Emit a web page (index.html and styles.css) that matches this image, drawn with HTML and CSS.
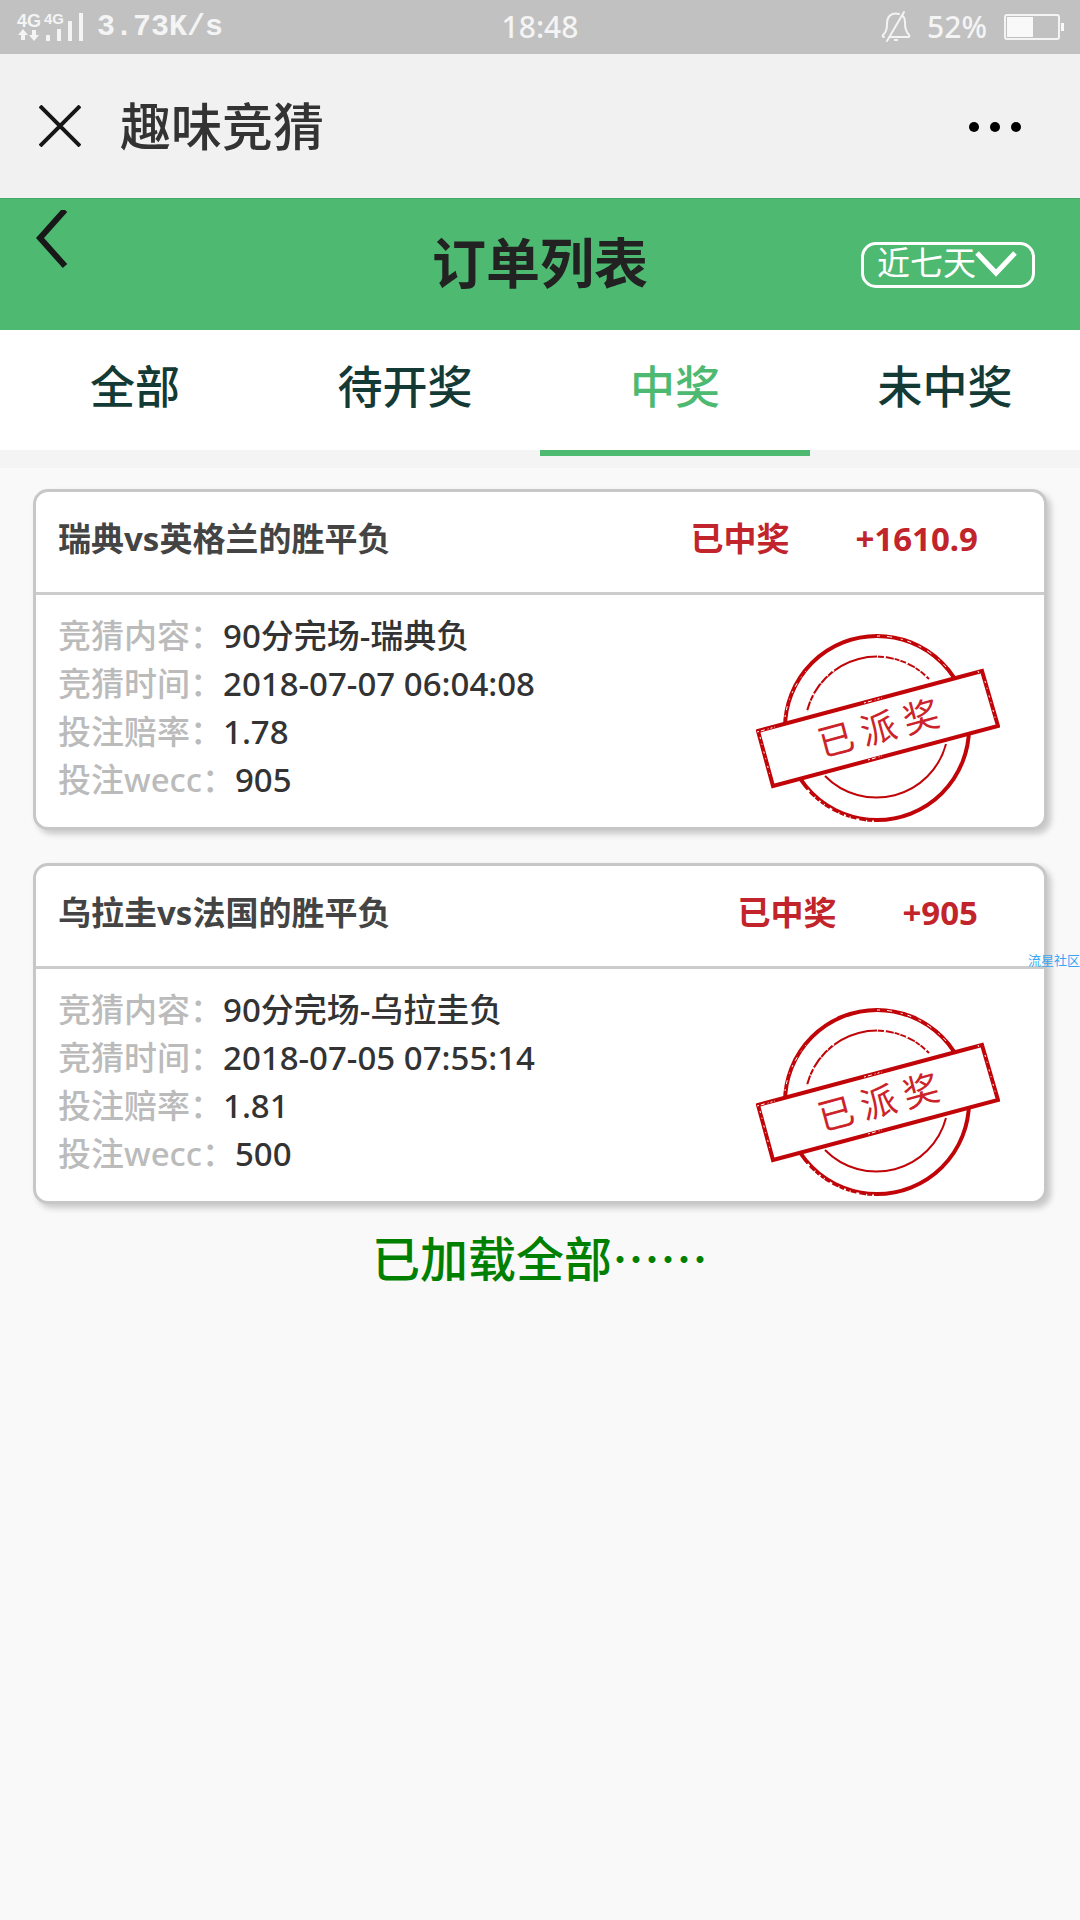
FILE: index.html
```html
<!DOCTYPE html>
<html lang="zh-CN">
<head>
<meta charset="utf-8">
<meta name="viewport" content="width=device-width">
<title>趣味竞猜</title>
<link rel="stylesheet" href="styles.css">
</head>
<body>
<svg width="0" height="0" class="symbols" aria-hidden="true">
  <symbol id="stamp" viewBox="0 0 244 190">
    <g fill="none" stroke="#c00408">
      <circle cx="121" cy="95" r="92" stroke-width="4"/>
      <path d="M51 78A72 72 0 0 1 173 46M190 111A72 72 0 0 1 69 143" stroke-width="2"/>
    </g>
    <g fill="none" stroke="#fff">
      <path d="M121 3A92 92 0 0 1 190 34" stroke-width="1" stroke-dasharray="3 7 5 9 2 5 4 8"/>
      <path d="M29 84A92 92 0 0 1 50 38" stroke-width="1" stroke-dasharray="2 5 4 7 1 6"/>
      <path d="M118 189A94 94 0 0 1 50 156" stroke-width="3" stroke-dasharray="2 5 1 7 3 6 1 4"/>
      <path d="M121 23A72 72 0 0 1 173 46" stroke-width="3" stroke-dasharray="1 6 2 8 1 5"/>
      <path d="M51 78A72 72 0 0 1 80 35" stroke-width="3" stroke-dasharray="1 9 1 6 2 12"/>
    </g>
    <path d="M2 98L226 38L242 93L17 153Z" fill="#fff" stroke="#c00408" stroke-width="4"/>
    <g fill="none" stroke="#fff">
      <path d="M108 70l18-5M112 127l14-4M1 99l18-5M222 38l5 12" stroke-width="1" stroke-dasharray="2 2 4 3 1 2"/>
      <path d="M4 104l11 42M229 48l11 40" stroke-width="1" stroke-dasharray="2 5 1 7"/>
    </g>
    <text class="stamp-text" x="-44 0 44" y="0" transform="translate(126 108) rotate(-15)" text-anchor="middle">已派奖</text>
  </symbol>
</svg>

<header class="status">
  <div class="status-left">
    <svg width="70" height="38" viewBox="14 8 70 38" fill="#f4f4f4" aria-hidden="true">
      <text class="net" x="16" y="27" font-size="18">4G</text>
      <text class="net" x="43" y="24" font-size="15">4G</text>
      <path d="M22 29l5 6h-3v5h-4v-5h-3zM33 41l-5-6h3v-5h4v5h3z"/>
      <path d="M45 35h4v6h-4zM56 29h4v12h-4zM67 21h4v20h-4zM78 13h4v28h-4z"/>
    </svg>
    <span class="speed">3.73K/s</span>
  </div>
  <time class="clock">18:48</time>
  <div class="status-right">
    <svg width="30" height="34" viewBox="880 11 30 34" fill="none" stroke="#f4f4f4" stroke-width="2" stroke-linecap="round" aria-hidden="true">
      <path d="M898 15c-8-2-12 3-12 9c0 7-1 9-4 12q-1 2 1 2M889 38h18q2 0 1-2c-3-4-4-6-4-13c0-2 0-4-2-6M903 13L886 42"/>
      <path d="M893 41h4" stroke-linecap="butt"/>
    </svg>
    <span>52%</span>
    <svg width="62" height="28" viewBox="1003 13 62 28" aria-hidden="true">
      <rect x="1005" y="15" width="54" height="24" rx="2" fill="none" stroke="#f4f4f4" stroke-width="2"/>
      <path d="M1007 17h26v20h-26zM1061 23h3v8h-3z" fill="#f9f9f9"/>
    </svg>
  </div>
</header>

<div class="nav">
  <button class="icon-btn" type="button" aria-label="关闭">
    <svg width="42" height="42" viewBox="0 0 42 42" fill="none" stroke="#161616" stroke-width="4"><path d="M1 1l40 40M41 1L1 41"/></svg>
  </button>
  <span class="nav-title">趣味竞猜</span>
  <button class="icon-btn more" type="button" aria-label="更多">
    <svg width="54" height="12" viewBox="0 0 54 12"><circle cx="6" cy="7" r="5"/><circle cx="27" cy="7" r="5"/><circle cx="48" cy="7" r="5"/></svg>
  </button>
</div>

<div class="banner">
  <a class="back" href="#" aria-label="返回">
    <svg width="32" height="58" viewBox="0 0 32 58" fill="none" stroke="#181818" stroke-width="6"><path d="M29 0L4 28L29 56"/></svg>
  </a>
  <h1>订单列表</h1>
  <div class="range">
    <select aria-label="时间范围"><option>近七天</option></select>
    <svg width="42" height="27" viewBox="0 0 42 27" fill="none" stroke="#fff" stroke-width="5" aria-hidden="true"><path d="M2 2l19 20L40 2"/></svg>
  </div>
</div>

<nav class="tabs">
  <a href="#">全部</a>
  <a href="#">待开奖</a>
  <a href="#" class="active" aria-current="page">中奖</a>
  <a href="#">未中奖</a>
</nav>

<main class="orders">
  <article class="card">
    <header class="card-head">
      <h2>瑞典vs英格兰的胜平负</h2>
      <span class="result">已中奖</span>
      <span class="amount">+1610.9</span>
    </header>
    <div class="card-body">
      <dl>
        <div><dt>竞猜内容：</dt><dd>90分完场-瑞典负</dd></div>
        <div><dt>竞猜时间：</dt><dd>2018-07-07 06:04:08</dd></div>
        <div><dt>投注赔率：</dt><dd>1.78</dd></div>
        <div><dt>投注wecc：</dt><dd>905</dd></div>
      </dl>
      <svg class="stamp" width="244" height="190" role="img" aria-label="已派奖"><use href="#stamp"/></svg>
    </div>
  </article>
  <article class="card">
    <header class="card-head">
      <h2>乌拉圭vs法国的胜平负</h2>
      <span class="result">已中奖</span>
      <span class="amount">+905</span>
    </header>
    <div class="card-body">
      <dl>
        <div><dt>竞猜内容：</dt><dd>90分完场-乌拉圭负</dd></div>
        <div><dt>竞猜时间：</dt><dd>2018-07-05 07:55:14</dd></div>
        <div><dt>投注赔率：</dt><dd>1.81</dd></div>
        <div><dt>投注wecc：</dt><dd>500</dd></div>
      </dl>
      <svg class="stamp" width="244" height="190" role="img" aria-label="已派奖"><use href="#stamp"/></svg>
    </div>
  </article>
  <p class="end">已加载全部……</p>
</main>
<span class="watermark">流星社区</span>
</body>
</html>
```
FILE: styles.css
```css
* { box-sizing: border-box; }

body {
  position: relative;
  margin: 0;
  min-height: 100vh;
  background: #f9f9f9;
  color: #333;
  font-family: "Noto Sans", "Noto Sans CJK SC", sans-serif;
  font-size: 33px;
  line-height: 48px;
}

h1, h2, p, dl, dd { margin: 0; }
a { color: inherit; text-decoration: none; }
svg { display: block; flex: none; }
.symbols { position: absolute; }

.status {
  display: grid;
  grid-template-columns: 1fr auto 1fr;
  align-items: center;
  height: 54px;
  padding: 0 15px;
  background: #c1c1c1;
  color: #f4f4f4;
  font-size: 30px;
  font-weight: 500;
}
.status-left, .status-right { display: flex; align-items: center; gap: 12px; }
.status-right { justify-content: flex-end; gap: 16px; }
.net { font-family: "Liberation Sans", sans-serif; font-weight: 700; }
.speed { font-family: "Liberation Mono", monospace; font-weight: 700; }

.nav {
  display: flex;
  align-items: center;
  height: 144px;
  padding: 0 58px 0 39px;
  background: #f1f1f1;
}
.icon-btn { padding: 0; border: 0; background: none; }
.nav-title {
  margin-left: 39px;
  font-size: 51px;
  font-weight: 500;
  line-height: 80px;
}
.more { margin-left: auto; }

.banner {
  display: grid;
  grid-template-columns: 1fr auto 1fr;
  align-items: center;
  height: 132px;
  padding: 0 36px;
  border-top: 1px solid #45a866;
  background: #4db971;
  color: #222;
}
.back { align-self: start; padding-top: 11px; }
h1 { padding-bottom: 4px; font-size: 54px; font-weight: 700; line-height: 80px; }
.range { display: grid; justify-self: end; align-items: center; width: 174px; margin-right: 9px; }
.range > * { grid-area: 1 / 1; }
.range select {
  width: 100%;
  height: 46px;
  padding: 0 0 4px 13px;
  border: 3px solid #fff;
  border-radius: 15px;
  background: none;
  color: #fff;
  font: inherit;
  line-height: 36px;
  appearance: none;
}
.range svg { justify-self: end; margin-right: 18px; pointer-events: none; }

.tabs {
  display: grid;
  grid-template-columns: repeat(4, 1fr);
  padding-bottom: 12px;
  background: #f4f4f4;
  color: #143a36;
  font-size: 45px;
  font-weight: 500;
  text-align: center;
}
.tabs a {
  padding: 21px 0 27px;
  border-bottom: 6px solid #f4f4f4;
  background: linear-gradient(#fff, #fff) padding-box;
  line-height: 72px;
}
.tabs .active { border-color: #4db971; color: #4db971; }

.orders {
  display: flex;
  flex-direction: column;
  gap: 33px;
  padding: 21px 33px;
}
.card {
  border: 3px solid #c7c7c7;
  border-radius: 15px;
  background: #fff;
  box-shadow: 4px 4px 6px rgba(0, 0, 0, .2);
}
.card-head {
  display: flex;
  align-items: center;
  padding: 23px 66px 29px 22px;
  border-bottom: 3px solid #ccc;
  color: #c1242b;
  font-weight: 700;
}
h2 { margin-right: auto; color: #444; font-size: 33px; font-weight: 700; }
.amount { margin-left: 66px; }
.card-body {
  display: flex;
  justify-content: space-between;
  padding: 17px 44px 4px 22px;
}
dl > div { display: flex; }
dt { color: #bbb; font-weight: 500; }
dd { font-weight: 500; }
.stamp { margin-top: 21px; }
.stamp-text {
  fill: #cc2229;
  font-family: "Noto Sans CJK SC", sans-serif;
  font-size: 36px;
}

.end {
  color: #008000;
  font-family: "Noto Sans CJK SC", sans-serif;
  font-size: 48px;
  font-weight: 500;
  line-height: 72px;
  margin-top: -17px;
  text-align: center;
}

.watermark {
  position: absolute;
  top: 950px;
  right: 0;
  color: #3aa5f5;
  font-size: 13px;
  line-height: 20px;
}
```
